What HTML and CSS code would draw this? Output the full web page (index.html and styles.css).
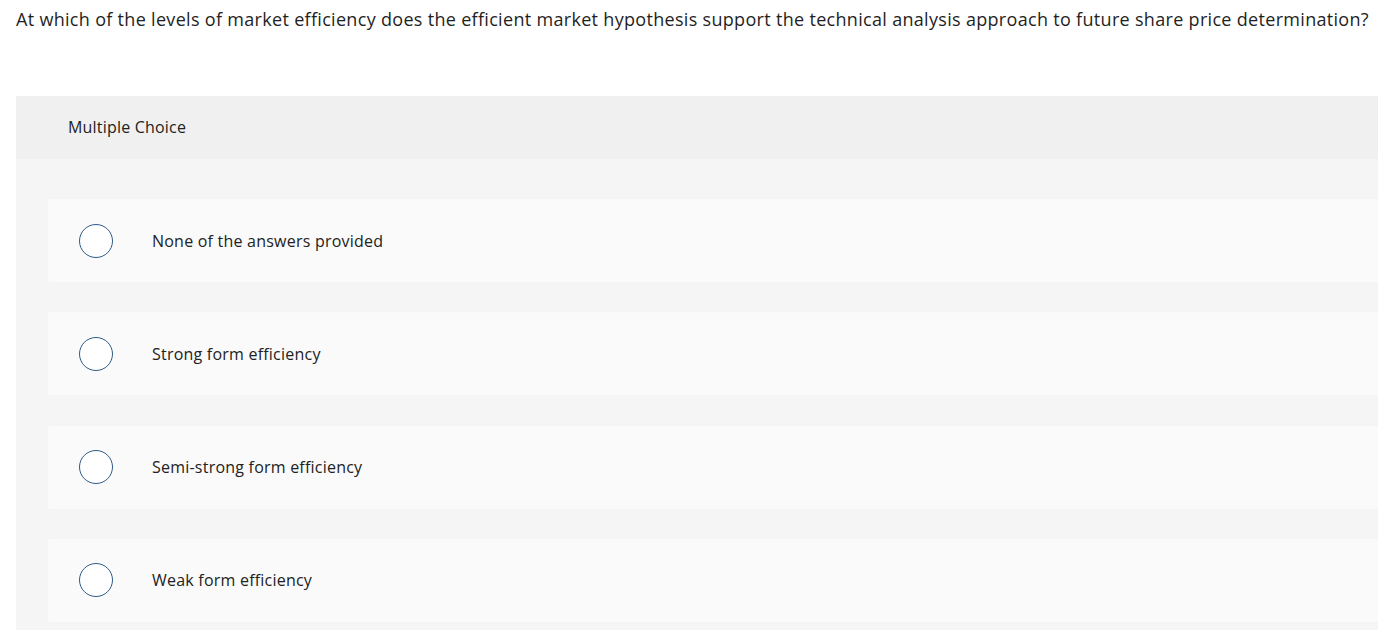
FILE: index.html
```html
<!DOCTYPE html>
<html lang="en">
<head>
<meta charset="utf-8">
<title>Multiple Choice</title>
<link rel="stylesheet" href="styles.css">
</head>
<body>
<main class="page">
  <p class="question">At which of the levels of market efficiency does the efficient market hypothesis support the technical analysis approach to future share price determination?</p>
  <section class="panel">
    <header class="panel-head">Multiple Choice</header>
    <ul class="choices">
      <li class="choice"><span class="radio"></span><span class="label">None of the answers provided</span></li>
      <li class="choice"><span class="radio"></span><span class="label">Strong form efficiency</span></li>
      <li class="choice"><span class="radio"></span><span class="label">Semi-strong form efficiency</span></li>
      <li class="choice"><span class="radio"></span><span class="label">Weak form efficiency</span></li>
    </ul>
  </section>
</main>
</body>
</html>
```

FILE: styles.css
```css
html, body {
  margin: 0;
  padding: 0;
  background: #fff;
  overflow: hidden;
}
body {
  font-family: "Open Sans", Lato, sans-serif;
  color: #222;
  font-variant-ligatures: none;
}
.page {
  padding: 0 0 0 16px;
}
.question {
  margin: 0;
  padding-top: 7px;
  font-size: 18px;
  line-height: 24px;
  letter-spacing: 0.31px;
  color: #1f1f1f;
  white-space: nowrap;
}
.panel {
  margin-top: 65px;
  margin-right: -20px;
  background: #f5f5f5;
}
.panel-head {
  height: 63px;
  display: flex;
  align-items: center;
  padding-left: 52px;
  padding-bottom: 1px;
  box-sizing: border-box;
  background: #f0f0f0;
  font-size: 16px;
  letter-spacing: 0.2px;
  color: #222;
}
.choices {
  list-style: none;
  margin: 0;
  padding: 40px 0 8px 32px;
  display: flex;
  flex-direction: column;
  gap: 30.33px;
}
.choice {
  height: 83px;
  display: flex;
  align-items: center;
  background: #fafafa;
  border-radius: 3px;
  padding-left: 31px;
}
.radio {
  width: 32px;
  height: 32px;
  border: 1.5px solid #2d5b88;
  border-radius: 50%;
  background: #fff;
  flex: none;
}
.label {
  margin-left: 39px;
  font-size: 16px;
  letter-spacing: 0.22px;
  color: #222;
}
```
